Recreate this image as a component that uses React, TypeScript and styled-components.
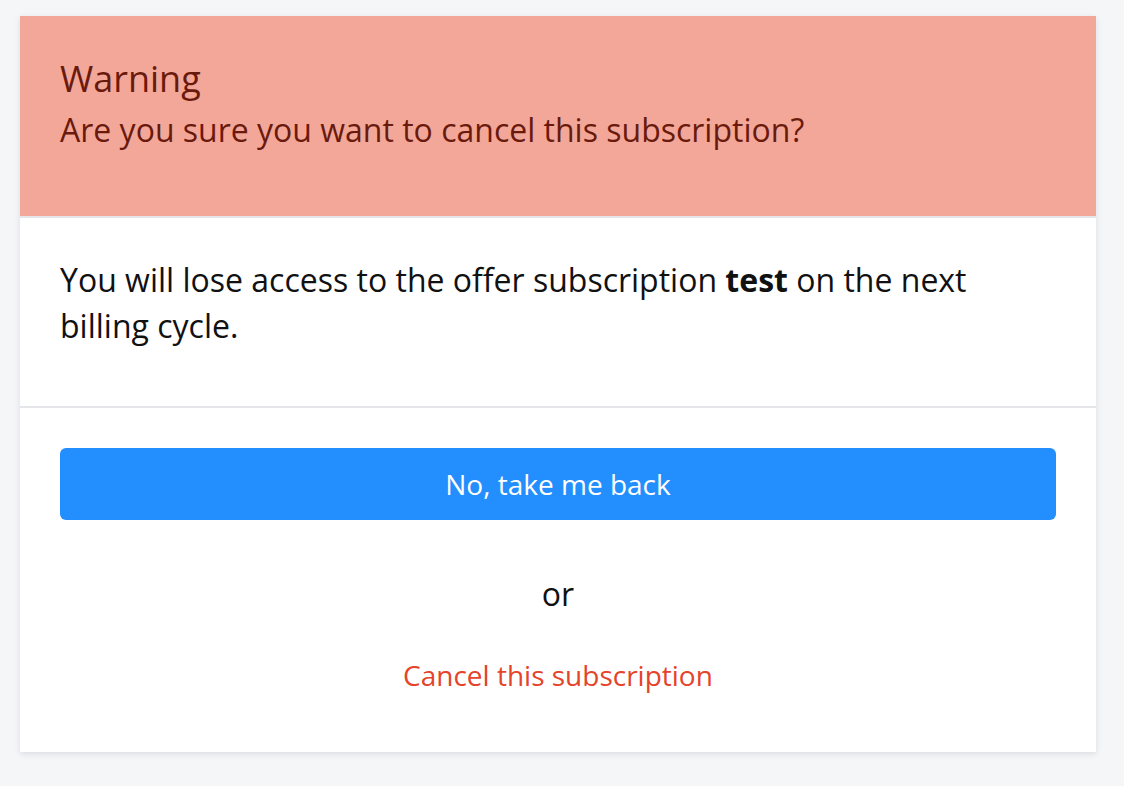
import React from "react";
import styled, { createGlobalStyle } from "styled-components";

const GlobalStyle = createGlobalStyle`
  html, body {
    margin: 0;
    padding: 0;
    background: #f5f6f8;
    font-family: "Open Sans", "Noto Sans", sans-serif;
  }
  * { box-sizing: border-box; }
`;

const Page = styled.div`
  padding: 16px 28px 34px 20px;
`;

const Card = styled.div`
  width: 1076px;
  background: #ffffff;
  box-shadow: 0 2px 6px rgba(30, 40, 70, 0.12);
  display: flex;
  flex-direction: column;
`;

const Header = styled.div`
  background: #f3a799;
  color: #6a1a0c;
  padding: 40px 40px 63px;
  border-bottom: 2px solid #e4e6ea;
`;

const Title = styled.div`
  font-size: 36px;
  line-height: 1.3;
`;

const Subtitle = styled.div`
  font-size: 32px;
  line-height: 46px;
  margin-top: 4px;
`;

const Body = styled.div`
  padding: 39px 40px 57px;
  border-bottom: 2px solid #e4e6ea;
`;

const Message = styled.p`
  margin: 0;
  font-size: 32px;
  line-height: 46px;
  color: #111111;
`;

const Footer = styled.div`
  padding: 40px 40px 54px;
  display: flex;
  flex-direction: column;
  align-items: center;
`;

const PrimaryButton = styled.button`
  width: 100%;
  height: 72px;
  border: none;
  border-radius: 6px;
  background: #238efe;
  color: #ffffff;
  font-family: inherit;
  font-size: 28px;
  cursor: pointer;
`;

const Or = styled.div`
  margin-top: 51px;
  font-size: 32px;
  line-height: 46px;
  color: #111111;
`;

const DangerLink = styled.a`
  margin-top: 35px;
  font-size: 28px;
  line-height: 46px;
  color: #e5432a;
  text-decoration: none;
  cursor: pointer;
`;

export default function App() {
  return (
    <>
      <GlobalStyle />
      <Page>
        <Card>
          <Header>
            <Title>Warning</Title>
            <Subtitle>Are you sure you want to cancel this subscription?</Subtitle>
          </Header>
          <Body>
            <Message>
              You will lose access to the offer subscription <strong>test</strong> on the next
              billing cycle.
            </Message>
          </Body>
          <Footer>
            <PrimaryButton>No, take me back</PrimaryButton>
            <Or>or</Or>
            <DangerLink>Cancel this subscription</DangerLink>
          </Footer>
        </Card>
      </Page>
    </>
  );
}
